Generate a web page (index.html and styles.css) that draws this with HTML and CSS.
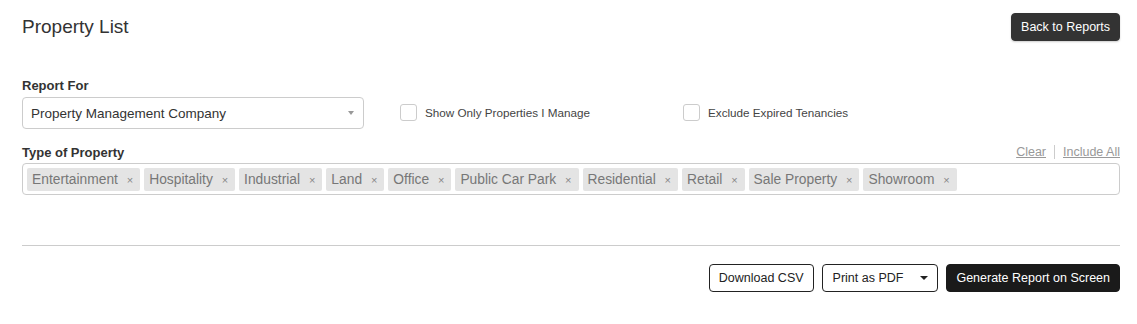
FILE: index.html
```html
<!DOCTYPE html>
<html lang="en">
<head>
    <meta charset="UTF-8">
    <meta name="viewport" content="width=device-width, initial-scale=1.0">
    <title>Property List</title>
    <link rel="stylesheet" href="styles.css">
</head>
<body>
    <div class="page">
        <div class="header">
            <h1>Property List</h1>
            <button class="btn btn-dark">Back to Reports</button>
        </div>

        <div class="form-row">
            <div class="field">
                <label class="field-label">Report For</label>
                <div class="select">
                    <span>Property Management Company</span>
                    <span class="select-caret"></span>
                </div>
            </div>
            <label class="check">
                <span class="check-box"></span>
                <span>Show Only Properties I Manage</span>
            </label>
            <label class="check">
                <span class="check-box"></span>
                <span>Exclude Expired Tenancies</span>
            </label>
        </div>

        <div class="tags-head">
            <span class="field-label">Type of Property</span>
            <div class="tag-links">
                <a href="#">Clear</a>
                <span class="sep"></span>
                <a href="#">Include All</a>
            </div>
        </div>
        <div class="tags">
            <span class="tag">Entertainment <i>×</i></span>
            <span class="tag">Hospitality <i>×</i></span>
            <span class="tag">Industrial <i>×</i></span>
            <span class="tag">Land <i>×</i></span>
            <span class="tag">Office <i>×</i></span>
            <span class="tag">Public Car Park <i>×</i></span>
            <span class="tag">Residential <i>×</i></span>
            <span class="tag">Retail <i>×</i></span>
            <span class="tag">Sale Property <i>×</i></span>
            <span class="tag">Showroom <i>×</i></span>
        </div>

        <hr class="divider">

        <div class="actions">
            <button class="btn btn-outline">Download CSV</button>
            <button class="btn btn-outline btn-split">Print as PDF <span class="caret"></span></button>
            <button class="btn btn-black">Generate Report on Screen</button>
        </div>
    </div>
</body>
</html>
```

FILE: styles.css
```css
body {
    margin: 0;
    font-family: "Liberation Sans", Arial, sans-serif;
    color: #333;
    background: #fff;
}
.page {
    padding: 13px 17px 0 22px;
}
.header {
    display: flex;
    justify-content: space-between;
    align-items: center;
}
h1 {
    margin: 0;
    font-size: 19px;
    font-weight: normal;
    color: #333;
}
.btn {
    font-family: inherit;
    font-size: 12.5px;
    height: 28px;
    padding: 0 8px;
    border-radius: 4px;
    cursor: pointer;
    display: inline-flex;
    align-items: center;
}
.btn-dark {
    background: #333;
    color: #fff;
    border: 1px solid #333;
    padding: 0 9px;
    box-shadow: 0 1px 2px rgba(0, 0, 0, 0.2);
}
.form-row {
    display: flex;
    align-items: flex-end;
    margin-top: 37px;
}
.field {
    width: 342px;
    margin-right: 36px;
}
.field-label {
    display: block;
    font-size: 13px;
    font-weight: bold;
    color: #333;
    line-height: 16px;
    margin-bottom: 3px;
}
.select {
    height: 30px;
    border: 1px solid #ccc;
    border-radius: 4px;
    display: flex;
    align-items: center;
    justify-content: space-between;
    padding: 0 8px;
    font-size: 13.5px;
    color: #333;
}
.select-caret {
    width: 0;
    height: 0;
    border-left: 3px solid transparent;
    border-right: 3px solid transparent;
    border-top: 4px solid #999;
    margin-right: 1px;
}
.check {
    width: 283px;
    height: 32px;
    padding-bottom: 2px;
    box-sizing: border-box;
    display: flex;
    align-items: center;
    font-size: 11.7px;
    color: #444;
}
.check-box {
    width: 15px;
    height: 15px;
    border: 1px solid #ccc;
    border-radius: 3px;
    margin-right: 8px;
}
.tags-head {
    display: flex;
    justify-content: space-between;
    align-items: flex-end;
    margin-top: 16px;
}
.tags-head .field-label {
    margin-bottom: 2px;
}
.tag-links {
    display: flex;
    align-items: center;
    font-size: 12.5px;
    margin-bottom: 4px;
}
.tag-links a {
    color: #999;
}
.sep {
    width: 1px;
    height: 14px;
    background: #ccc;
    margin: 0 8px;
}
.tags {
    border: 1px solid #ccc;
    border-radius: 4px;
    padding: 4px 4px 3px;
    display: flex;
    gap: 4px;
}
.tag {
    background: #e4e4e4;
    color: #777;
    font-size: 13.8px;
    height: 23px;
    line-height: 23px;
    padding: 0 7px 0 5px;
    border-radius: 2px;
}
.tag i {
    font-style: normal;
    font-size: 11px;
    color: #888;
    margin-left: 5px;
}
.divider {
    border: 0;
    border-top: 1px solid #ccc;
    margin: 50px 0 0;
}
.actions {
    display: flex;
    justify-content: flex-end;
    gap: 8px;
    margin-top: 18px;
}
.btn-outline {
    background: #fff;
    color: #222;
    border: 1px solid #222;
    padding: 0 9px;
}
.btn-split {
    padding: 0 9px 0 10px;
}
.caret {
    width: 0;
    height: 0;
    border-left: 4px solid transparent;
    border-right: 4px solid transparent;
    border-top: 4px solid #222;
    margin-left: 17px;
}
.btn-black {
    background: #1a1a1a;
    color: #fff;
    border: 1px solid #1a1a1a;
    padding: 0 9px;
}
```
